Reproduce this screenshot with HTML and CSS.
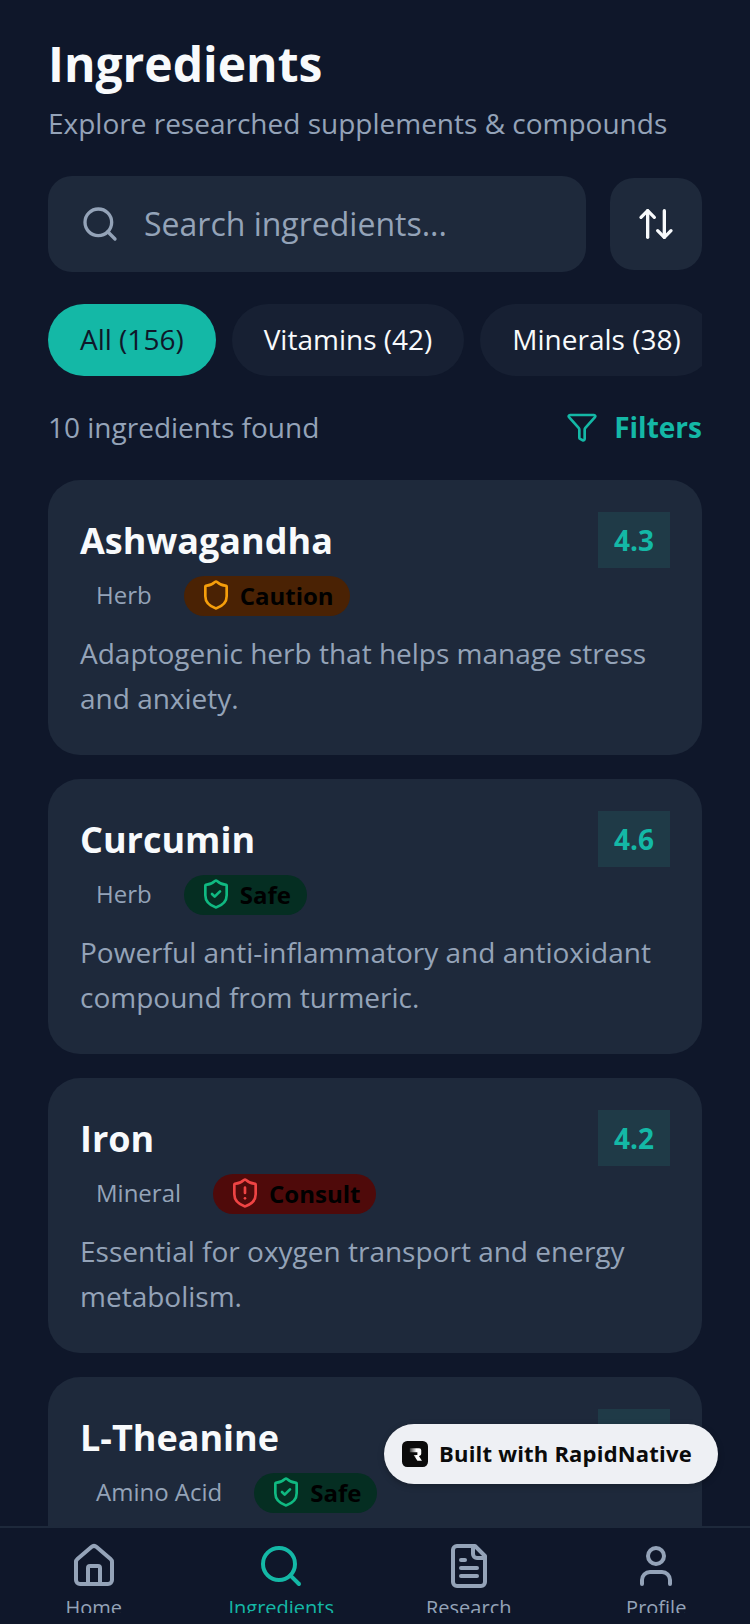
FILE: index.html
```html
<!DOCTYPE html>
<html lang="en">
<head>
    <meta charset="UTF-8">
    <meta name="viewport" content="width=device-width, initial-scale=1.0">
    <title>Ingredients</title>
    <link rel="stylesheet" href="styles.css">
</head>
<body>
    <div class="screen">
        <main class="content">
            <h1>Ingredients</h1>
            <p class="subtitle">Explore researched supplements &amp; compounds</p>

            <div class="search-row">
                <div class="search-box">
                    <svg class="icon search-icon" viewBox="0 0 24 24"><path d="m21 21-4.34-4.34"/><circle cx="11" cy="11" r="8"/></svg>
                    <span class="search-text">Search ingredients...</span>
                </div>
                <div class="sort-btn">
                    <svg class="icon sort-icon" viewBox="0 0 24 24"><path d="m21 16-4 4-4-4"/><path d="M17 20V4"/><path d="m3 8 4-4 4 4"/><path d="M7 4v16"/></svg>
                </div>
            </div>

            <div class="chips">
                <span class="chip chip-active">All (156)</span>
                <span class="chip">Vitamins (42)</span>
                <span class="chip">Minerals (38)</span>
            </div>

            <div class="count-row">
                <span class="count">10 ingredients found</span>
                <span class="filters">
                    <svg class="icon filter-icon" viewBox="0 0 24 24"><path d="M10 20a1 1 0 0 0 .553.895l2 1A1 1 0 0 0 14 21v-7a2 2 0 0 1 .517-1.341L21.74 4.67A1 1 0 0 0 21 3H3a1 1 0 0 0-.742 1.67l7.225 7.989A2 2 0 0 1 10 14z"/></svg>
                    Filters
                </span>
            </div>

            <article class="card">
                <div class="card-head">
                    <h2>Ashwagandha</h2>
                    <span class="rating">4.3</span>
                </div>
                <div class="meta">
                    <span class="type">Herb</span>
                    <span class="pill pill-caution">
                        <svg class="icon" viewBox="0 0 24 24"><path d="M20 13c0 5-3.5 7.5-7.66 8.95a1 1 0 0 1-.67-.01C7.5 20.5 4 18 4 13V6a1 1 0 0 1 1-1c2 0 4.5-1.2 6.24-2.72a1.17 1.17 0 0 1 1.52 0C14.51 3.81 17 5 19 5a1 1 0 0 1 1 1z"/></svg>
                        Caution
                    </span>
                </div>
                <p class="desc">Adaptogenic herb that helps manage stress and anxiety.</p>
            </article>

            <article class="card">
                <div class="card-head">
                    <h2>Curcumin</h2>
                    <span class="rating">4.6</span>
                </div>
                <div class="meta">
                    <span class="type">Herb</span>
                    <span class="pill pill-safe">
                        <svg class="icon" viewBox="0 0 24 24"><path d="M20 13c0 5-3.5 7.5-7.66 8.95a1 1 0 0 1-.67-.01C7.5 20.5 4 18 4 13V6a1 1 0 0 1 1-1c2 0 4.5-1.2 6.24-2.72a1.17 1.17 0 0 1 1.52 0C14.51 3.81 17 5 19 5a1 1 0 0 1 1 1z"/><path d="m9 12 2 2 4-4"/></svg>
                        Safe
                    </span>
                </div>
                <p class="desc">Powerful anti-inflammatory and antioxidant compound from turmeric.</p>
            </article>

            <article class="card">
                <div class="card-head">
                    <h2>Iron</h2>
                    <span class="rating">4.2</span>
                </div>
                <div class="meta">
                    <span class="type">Mineral</span>
                    <span class="pill pill-consult">
                        <svg class="icon" viewBox="0 0 24 24"><path d="M20 13c0 5-3.5 7.5-7.66 8.95a1 1 0 0 1-.67-.01C7.5 20.5 4 18 4 13V6a1 1 0 0 1 1-1c2 0 4.5-1.2 6.24-2.72a1.17 1.17 0 0 1 1.52 0C14.51 3.81 17 5 19 5a1 1 0 0 1 1 1z"/><path d="M12 8v4"/><path d="M12 16h.01"/></svg>
                        Consult
                    </span>
                </div>
                <p class="desc">Essential for oxygen transport and energy metabolism.</p>
            </article>

            <article class="card card-cut">
                <div class="card-head">
                    <h2>L-Theanine</h2>
                    <span class="rating"></span>
                </div>
                <div class="meta">
                    <span class="type">Amino Acid</span>
                    <span class="pill pill-safe">
                        <svg class="icon" viewBox="0 0 24 24"><path d="M20 13c0 5-3.5 7.5-7.66 8.95a1 1 0 0 1-.67-.01C7.5 20.5 4 18 4 13V6a1 1 0 0 1 1-1c2 0 4.5-1.2 6.24-2.72a1.17 1.17 0 0 1 1.52 0C14.51 3.81 17 5 19 5a1 1 0 0 1 1 1z"/><path d="m9 12 2 2 4-4"/></svg>
                        Safe
                    </span>
                </div>
            </article>
        </main>

        <div class="built-badge">
            <svg class="built-logo" viewBox="0 0 25 25">
                <defs>
                    <linearGradient id="logoFade" x1="0" y1="0" x2="1" y2="0">
                        <stop offset="0" stop-color="#3a3a3a"/>
                        <stop offset="0.55" stop-color="#fff"/>
                    </linearGradient>
                </defs>
                <rect width="25" height="25" rx="5" fill="#0b0b0b"/>
                <path d="M7.5 7h9a2 2 0 0 1 2 2v3.2a2 2 0 0 1-1.4 1.9l-.9.3 3 4.6h-4.4l-3.6-5.6h3.6v-2.6H7.5z" fill="url(#logoFade)"/>
            </svg>
            <span class="built-text">Built with RapidNative</span>
        </div>

        <nav class="tabbar">
            <div class="tab">
                <svg class="icon" viewBox="0 0 24 24"><path d="M15 21v-8a1 1 0 0 0-1-1h-4a1 1 0 0 0-1 1v8"/><path d="M3 10a2 2 0 0 1 .709-1.528l7-5.999a2 2 0 0 1 2.582 0l7 5.999A2 2 0 0 1 21 10v9a2 2 0 0 1-2 2H5a2 2 0 0 1-2-2z"/></svg>
                <span>Home</span>
            </div>
            <div class="tab tab-active">
                <svg class="icon" viewBox="0 0 24 24"><path d="m21 21-4.34-4.34"/><circle cx="11" cy="11" r="8"/></svg>
                <span>Ingredients</span>
            </div>
            <div class="tab">
                <svg class="icon" viewBox="0 0 24 24"><path d="M15 2H6a2 2 0 0 0-2 2v16a2 2 0 0 0 2 2h12a2 2 0 0 0 2-2V7Z"/><path d="M14 2v4a2 2 0 0 0 2 2h4"/><path d="M10 9H8"/><path d="M16 13H8"/><path d="M16 17H8"/></svg>
                <span>Research</span>
            </div>
            <div class="tab">
                <svg class="icon" viewBox="0 0 24 24"><path d="M19 21v-2a4 4 0 0 0-4-4H9a4 4 0 0 0-4 4v2"/><circle cx="12" cy="7" r="4"/></svg>
                <span>Profile</span>
            </div>
        </nav>
    </div>
</body>
</html>
```
FILE: styles.css
```css
* {
    box-sizing: border-box;
}
html, body {
    margin: 0;
    padding: 0;
}
body {
    font-family: "Open Sans", sans-serif;
    background-color: #0f172a;
    color: #f8fafc;
}
.screen {
    position: relative;
    width: 750px;
    height: 1624px;
    overflow: hidden;
    background: #0f172a;
}
.icon {
    fill: none;
    stroke: currentColor;
    stroke-width: 2;
    stroke-linecap: round;
    stroke-linejoin: round;
    flex: none;
}
.content {
    padding: 32px 48px 0;
}
h1 {
    margin: 0;
    font-size: 48px;
    line-height: 64px;
    font-weight: 700;
    color: #f8fafc;
}
.subtitle {
    margin: 7px 0 0;
    font-size: 28px;
    line-height: 40px;
    color: #94a3b8;
}
.search-row {
    display: flex;
    align-items: center;
    gap: 24px;
    margin-top: 33px;
}
.search-box {
    flex: 1;
    height: 96px;
    display: flex;
    align-items: center;
    gap: 24px;
    padding: 0 32px;
    background: #1e293b;
    border-radius: 24px;
    font-size: 32px;
    color: #94a3b8;
}
.search-text {
    margin-bottom: 2px;
}
.search-icon {
    width: 40px;
    height: 40px;
}
.sort-btn {
    width: 92px;
    height: 92px;
    display: flex;
    align-items: center;
    justify-content: center;
    background: #1e293b;
    border-radius: 24px;
    color: #f8fafc;
}
.sort-icon {
    width: 40px;
    height: 40px;
}
.chips {
    display: flex;
    gap: 16px;
    margin-top: 32px;
    overflow: hidden;
}
.chip {
    flex: none;
    height: 72px;
    padding: 0 32px 2px;
    display: flex;
    align-items: center;
    border-radius: 36px;
    background: #172033;
    font-size: 28px;
    color: #f8fafc;
}
.chip-active {
    background: #14b8a6;
    color: #0f172a;
}
.count-row {
    display: flex;
    align-items: center;
    justify-content: space-between;
    margin-top: 31px;
    height: 40px;
}
.count {
    font-size: 28px;
    color: #94a3b8;
}
.filters {
    display: flex;
    align-items: center;
    gap: 16px;
    font-size: 28px;
    font-weight: 700;
    color: #14b8a6;
}
.filter-icon {
    width: 32px;
    height: 32px;
}
.card {
    margin-top: 24px;
    padding: 32px 32px 34px;
    background: #1e293b;
    border-radius: 32px;
}
.count-row + .card {
    margin-top: 33px;
}
.card-cut {
    height: 276px;
}
.card-head {
    display: flex;
    align-items: center;
    justify-content: space-between;
}
h2 {
    margin: 0;
    font-size: 36px;
    font-weight: 700;
    color: #f8fafc;
}
.rating {
    width: 72px;
    height: 56px;
    display: flex;
    align-items: center;
    justify-content: center;
    background: #1f3a47;
    font-size: 28px;
    font-weight: 700;
    color: #14b8a6;
}
.meta {
    display: flex;
    align-items: center;
    gap: 16px;
    margin-top: 8px;
}
.type {
    padding: 0 16px 3px;
    font-size: 24px;
    color: #94a3b8;
}
.pill {
    height: 40px;
    padding: 0 16px 2px;
    display: flex;
    align-items: center;
    gap: 8px;
    border-radius: 20px;
    font-size: 24px;
    font-weight: 700;
    color: #000;
}
.pill .icon {
    width: 32px;
    height: 32px;
}
.pill-caution {
    background: #4a2204;
}
.pill-caution .icon {
    color: #f59e0b;
}
.pill-safe {
    background: #052e22;
}
.pill-safe .icon {
    color: #10b981;
}
.pill-consult {
    background: #4f0a0a;
}
.pill-consult .icon {
    color: #ef4444;
}
.desc {
    margin: 15px 0 0;
    font-size: 28px;
    line-height: 45px;
    color: #94a3b8;
}
.built-badge {
    position: absolute;
    left: 384px;
    top: 1424px;
    width: 334px;
    height: 60px;
    display: flex;
    align-items: center;
    gap: 11px;
    padding: 0 12px 0 18px;
    background: #eef0f4;
    border-radius: 30px;
    box-shadow: 0 2px 6px rgba(0, 0, 0, 0.25);
    font-size: 22px;
    font-weight: 700;
    letter-spacing: 0.2px;
    color: #0b0b0b;
}
.built-text {
    margin-bottom: 2px;
}
.built-logo {
    width: 26px;
    height: 26px;
    flex: none;
}
.tabbar {
    position: absolute;
    left: 0;
    right: 0;
    bottom: 0;
    height: 98px;
    display: flex;
    padding: 14px 0 0;
    background: #0f172a;
    border-top: 2px solid #1e293b;
}
.tab {
    flex: 1;
    display: flex;
    flex-direction: column;
    align-items: center;
    gap: 4px;
    height: 71px;
    overflow: hidden;
    color: #94a3b8;
    font-size: 20px;
}
.tab .icon {
    width: 48px;
    height: 48px;
}
.tab-active {
    color: #14b8a6;
}
```
